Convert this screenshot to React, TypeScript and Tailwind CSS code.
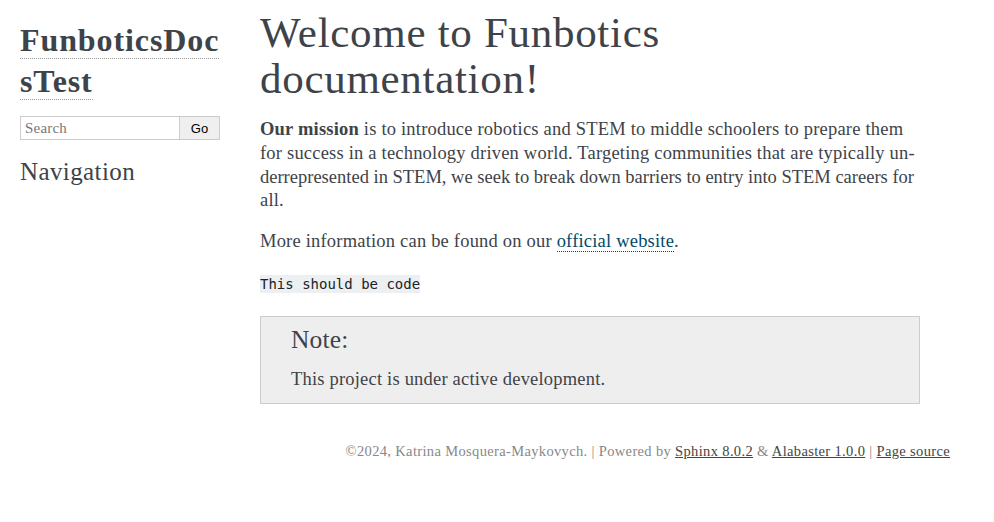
import React from "react";

const serif = "font-['Liberation_Serif',serif]";

export default function App() {
  return (
    <div className={`min-h-screen bg-white text-[#3E4349] ${serif} text-[18.5px] tracking-[0.2px] leading-[23.8px]`}>
      <div className="w-[940px] ml-[10px] pt-[10px] flex">
        <aside className="w-[220px] px-[10px] pt-[10px]">
          <h1 className="text-[32px] tracking-[0.9px] font-bold leading-[41px] m-0">
            <a className="border-b border-dotted border-[#999] text-[#3E4349]">FunboticsDoc</a>
            <br />
            <a className="border-b border-dotted border-[#999] text-[#3E4349]">sTest</a>
          </h1>
          <div className="flex mt-[14px] h-[24px]">
            <input
              placeholder="Search"
              className={`w-[160px] h-[24px] border border-[#ccc] px-[4px] text-[15px] tracking-[0.2px] ${serif} placeholder:text-[#777] outline-none`}
            />
            <button className="w-[40px] h-[24px] border border-l-0 border-[#ccc] bg-[#efefef] text-[13px] text-black font-['Liberation_Sans',sans-serif]">
              Go
            </button>
          </div>
          <h3 className="text-[25px] tracking-[0.4px] font-normal mt-[16px] leading-[1.3]">Navigation</h3>
        </aside>
        <main className="w-[720px] px-[30px]">
          <h1 className="text-[43px] tracking-[0.7px] leading-[46px] font-normal m-0">
            Welcome to Funbotics documentation!
          </h1>
          <p className="mt-[16px] mb-[17px] whitespace-nowrap">
            <strong>Our mission</strong> is to introduce robotics and STEM to middle schoolers to prepare them
            <br />
            for success in a technology driven world. Targeting communities that are typically un-
            <br />
            <span className="tracking-[0px]">derrepresented in STEM, we seek to break down barriers to entry into STEM careers for</span>
            <br />
            all.
          </p>
          <p className="mb-[18px]">
            More information can be found on our{" "}
            <a className="text-[#004B6B] border-b border-dotted border-[#004B6B]">official website</a>.
          </p>
          <p className="mb-[19px] tracking-normal">
            <code className="bg-[#ECF0F3] text-[#222] text-[14px] font-['DejaVu_Sans_Mono',monospace] py-[1px]">
              This should be code
            </code>
          </p>
          <div className="bg-[#EEEEEE] border border-[#CCCCCC] px-[30px] pt-[9px] pb-[11px]">
            <p className="text-[25.5px] tracking-[0.2px] leading-none mb-[16px] mt-[1px]">Note:</p>
            <p>This project is under active development.</p>
          </div>
        </main>
      </div>
      <div className="w-[940px] ml-[10px] mt-[37px] text-right text-[14.5px] tracking-[0.35px] leading-[20px] text-[#888]">
        ©2024, Katrina Mosquera-Maykovych. | Powered by{" "}
        <a className="text-[#444] underline">Sphinx 8.0.2</a> &amp;{" "}
        <a className="text-[#444] underline">Alabaster 1.0.0</a> |{" "}
        <a className="text-[#444] underline">Page source</a>
      </div>
    </div>
  );
}
